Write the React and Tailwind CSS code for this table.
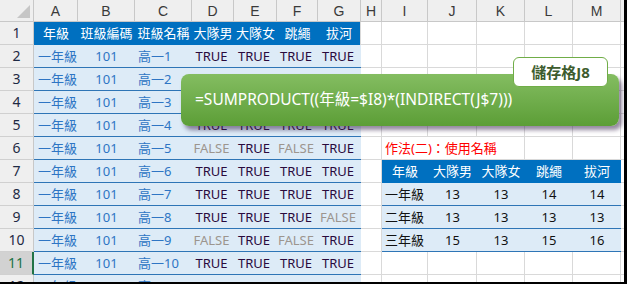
import React from 'react';

const COLS = ['A', 'B', 'C', 'D', 'E', 'F', 'G', 'H', 'I', 'J', 'K', 'L', 'M'];
const HEAD = ['年級', '班級編碼', '班級名稱', '大隊男', '大隊女', '跳繩', '拔河'];

const T = true, F = false;
const BOOLS = [
  [T, T, T, T], [T, T, T, T], [T, T, T, T], [T, T, T, T],
  [F, T, F, T], [T, T, T, T], [T, T, T, T], [T, T, T, F],
  [F, T, F, T], [T, T, T, T], [T, T, T, T],
];

const SUMMARY = [
  ['一年級', 13, 13, 14, 14],
  ['二年級', 13, 13, 13, 13],
  ['三年級', 15, 13, 15, 16],
];

const gridLine = 'border-r border-b border-[#d9d9d9]';
const blueCell = 'bg-[#ddebf7] border-b border-[#2e75b6]';
const headCell = 'bg-[#0070c0] text-white';

function Cell({ className = '', children }) {
  return (
    <div className={`flex items-center h-full text-[13px] leading-none whitespace-nowrap overflow-hidden ${className}`}>
      {children}
    </div>
  );
}

function Bool({ v }) {
  return (
    <Cell className={`${blueCell} justify-center pr-[3px] ${v ? 'text-[#2a0a3d]' : 'text-[#9c958e]'}`}>
      {v ? 'TRUE' : 'FALSE'}
    </Cell>
  );
}

export default function App() {
  const rows = [];

  for (let r = 1; r <= 12; r++) {
    const selected = r === 11;
    rows.push(
      <Cell
        key={`h${r}`}
        className={`justify-center text-[14px] border-b border-[#d0d0d0] ${
          selected ? 'bg-[#d2d2d2] text-[#217346] border-r-2 border-r-[#217346]' : 'bg-[#efefef] text-[#1e2a44] border-r border-r-[#c8c8c8]'
        }`}
      >
        {r}
      </Cell>
    );

    if (r === 1) {
      HEAD.forEach((h, i) =>
        rows.push(
          <Cell key={`a${r}${i}`} className={`${headCell} justify-center ${i === 6 ? 'border-r border-[#d9d9d9]' : ''}`}>
            {h}
          </Cell>
        )
      );
    } else {
      const b = BOOLS[r - 2];
      rows.push(<Cell key={`a${r}`} className={`${blueCell} pl-[4px] text-[#2e75c4]`}>一年級</Cell>);
      rows.push(<Cell key={`b${r}`} className={`${blueCell} justify-center text-[#2e75c4]`}>101</Cell>);
      rows.push(<Cell key={`c${r}`} className={`${blueCell} pl-[3px] text-[#2e75c4]`}>{`高一${r - 1}`}</Cell>);
      b.forEach((v, i) => rows.push(<Bool key={`d${r}${i}`} v={v} />));
    }

    // column H
    rows.push(<Cell key={`hh${r}`} className={gridLine} />);

    // columns I-M
    if (r === 6) {
      rows.push(
        <Cell key={`t${r}`} className="col-span-3 border-b border-r border-[#d9d9d9] pl-[3px] text-[#ff0000]">
          作法(二)：使用名稱
        </Cell>
      );
      rows.push(<Cell key={`l${r}`} className={gridLine} />);
      rows.push(<Cell key={`m${r}`} className={gridLine} />);
    } else if (r === 7) {
      HEAD.filter((_, i) => i === 0 || i > 2).forEach((h, i) =>
        rows.push(
          <Cell key={`s${r}${i}`} className={`${headCell} justify-center`}>
            {h}
          </Cell>
        )
      );
    } else if (r >= 8 && r <= 10) {
      const s = SUMMARY[r - 8];
      s.forEach((v, i) =>
        rows.push(
          <Cell key={`s${r}${i}`} className={`${blueCell} text-[#111] ${i === 0 ? 'pl-[3px]' : 'justify-center'}`}>
            {v}
          </Cell>
        )
      );
    } else {
      for (let i = 0; i < 5; i++) rows.push(<Cell key={`e${r}${i}`} className={gridLine} />);
    }

    rows.push(<Cell key={`z${r}`} className="border-b border-[#d9d9d9]" />);
  }

  return (
    <div className="relative w-[627px] h-[284px] overflow-hidden bg-white border-r-[3px] border-b-2 border-black font-['Noto_Sans','Noto_Sans_CJK_TC',sans-serif]">
      <div className="grid grid-cols-[34px_44px_57px_57px_42px_43px_41px_43px_21px_46px_49px_48px_48px_48px_1fr] grid-rows-[22px_repeat(12,23px)]">
        {/* corner */}
        <div className="relative bg-[#efefef] border-r border-b border-[#c8c8c8]">
          <svg className="absolute right-[3px] bottom-[3px]" width="13" height="13" viewBox="0 0 13 13">
            <polygon points="13,0 13,13 0,13" fill="#c6c6c6" />
          </svg>
        </div>
        {COLS.map((c) => (
          <Cell key={c} className="justify-center bg-[#efefef] border-r border-b border-[#c8c8c8] text-[14px] text-[#3a3a3a] font-['Liberation_Sans',sans-serif]">
            {c}
          </Cell>
        ))}
        <div className="bg-[#efefef] border-b border-[#c8c8c8]" />
        {rows}
      </div>

      {/* formula callout */}
      <div className="absolute left-[181px] top-[74px] w-[438px] h-[52px] rounded-[8px] bg-gradient-to-b from-[#84bd61] to-[#5c9e36] shadow-[3px_4px_4px_rgba(60,40,80,0.55)] flex items-center pl-[14px] text-white text-[15.5px] whitespace-nowrap">
        =SUMPRODUCT((年級=$I8)*(INDIRECT(J$7)))
      </div>

      {/* cell label */}
      <div className="absolute left-[513px] top-[57px] w-[95px] h-[30px] rounded-[6px] bg-white border border-[#70ad47] flex items-center justify-center text-[15px] font-bold text-[#3d5c2e]">
        儲存格J8
      </div>
    </div>
  );
}
